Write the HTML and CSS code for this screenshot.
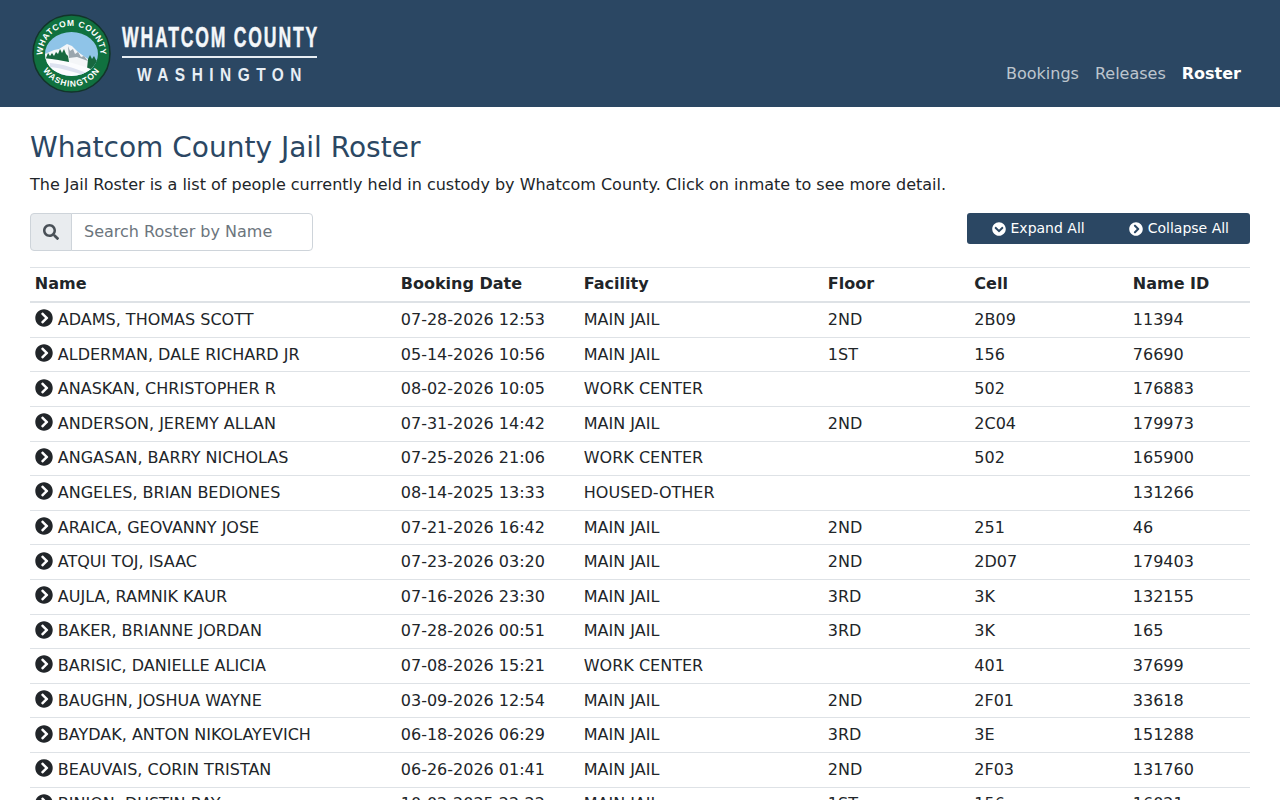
FILE: index.html
```html
<!DOCTYPE html>
<html lang="en">
<head>
    <meta charset="UTF-8">
    <meta name="viewport" content="width=device-width, initial-scale=1.0">
    <title>Whatcom County Jail Roster</title>
    <link rel="stylesheet" href="styles.css">
</head>
<body>
<svg class="icon-defs" width="0" height="0" aria-hidden="true">
    <symbol id="chevron-right" viewBox="0 0 512 512">
        <path d="M256 8c137 0 248 111 248 248S393 504 256 504 8 393 8 256 119 8 256 8zm113.900 231L234.400 103.500c-9.400-9.400-24.600-9.400-33.900 0l-17 17c-9.400 9.400-9.400 24.600 0 33.900L285.100 256 183.500 357.600c-9.400 9.400-9.400 24.600 0 33.900l17 17c9.400 9.400 24.600 9.400 33.900 0L369.900 273c9.400-9.400 9.400-24.600 0-34z"/>
    </symbol>
    <symbol id="chevron-down" viewBox="0 0 512 512">
        <path d="M504 256c0 137-111 248-248 248S8 393 8 256 119 8 256 8s248 111 248 248zM273 369.900l135.500-135.500c9.400-9.400 9.400-24.600 0-33.900l-17-17c-9.400-9.400-24.600-9.400-33.900 0L256 285.100 154.400 183.500c-9.400-9.400-24.600-9.400-33.900 0l-17 17c-9.400 9.400-9.400 24.600 0 33.900L239 369.900c9.400 9.400 24.600 9.400 34 0z"/>
    </symbol>
</svg>
<header class="header">
    <svg class="logo" viewBox="0 0 290 82" role="img" aria-label="Whatcom County Washington">
        <defs>
            <path id="arc-top" d="M12.500 43a29 29 0 0 1 58 0"/>
            <path id="arc-bottom" d="M8.500 41.500a33 33 0 0 0 66 0"/>
            <clipPath id="scene"><ellipse cx="41.500" cy="42" rx="26.500" ry="22"/></clipPath>
        </defs>
        <circle cx="41.500" cy="41.500" r="38.500" fill="#10713f" stroke="#12352a" stroke-width="1.500"/>
        <g clip-path="url(#scene)">
            <rect x="12" y="15" width="60" height="55" fill="#8fc4e8"/>
            <path d="M15 42l9-4 5-1 8-5 5 2 6 6 7 5 9 6v8H15z" fill="#f4f6f8"/>
            <path d="M38 34l2 5 3-2 2 5 3-2 3 5 3-1 4 5-11-4-8 1z" fill="#9aa6ae"/>
            <path d="M16 46l2-5 2 3 2-3 2 3 2-4 2 2 2-5 2 4 2-4 2 5 2 2 1 6H16zM58 47l2-4 2 4 2-3 2 4 2 1v8H57z" fill="#17683f"/>
            <path d="M10 46c20 1 40 6 60 15v10H10z" fill="#fbfcfe"/>
            <path d="M20 51c12 1 26 5 38 11l-2 2c-12-4-24-8-36-9z" fill="#dde2f0"/>
        </g>
        <text class="logo-seal"><textPath href="#arc-top" startOffset="50%" text-anchor="middle">WHATCOM COUNTY</textPath></text>
        <text class="logo-seal logo-seal-wide"><textPath href="#arc-bottom" startOffset="50%" text-anchor="middle">WASHINGTON</textPath></text>
        <text class="logo-county" x="92" y="35" textLength="197" lengthAdjust="spacingAndGlyphs">WHATCOM COUNTY</text>
        <rect x="92" y="44" width="195" height="2" fill="#e8eef4"/>
        <text class="logo-state" x="107" y="69" textLength="171" lengthAdjust="spacingAndGlyphs">WASHINGTON</text>
    </svg>
    <nav class="nav">
        <a href="#">Bookings</a>
        <a href="#">Releases</a>
        <a href="#" class="active">Roster</a>
    </nav>
</header>
<main class="content">
    <h1>Whatcom County Jail Roster</h1>
    <p class="intro">The Jail Roster is a list of people currently held in custody by Whatcom County. Click on inmate to see more detail.</p>
    <div class="toolbar">
        <div class="search">
            <span class="search-icon">
                <svg viewBox="0 0 512 512"><path d="M505 442.700L405.300 343c-4.500-4.500-10.600-7-17-7H372c27.600-35.300 44-79.700 44-128C416 93.100 322.900 0 208 0S0 93.100 0 208s93.100 208 208 208c48.300 0 92.700-16.400 128-44v16.300c0 6.400 2.500 12.500 7 17l99.700 99.700c9.400 9.400 24.600 9.400 33.900 0l28.300-28.300c9.400-9.400 9.400-24.600.1-34zM208 336c-70.700 0-128-57.200-128-128 0-70.700 57.200-128 128-128 70.700 0 128 57.200 128 128 0 70.700-57.200 128-128 128z"/></svg>
            </span>
            <input class="search-input" type="text" placeholder="Search Roster by Name">
        </div>
        <div class="btn-group">
            <button class="btn" type="button"><svg class="btn-icon"><use href="#chevron-down"/></svg> Expand All</button>
            <button class="btn" type="button"><svg class="btn-icon"><use href="#chevron-right"/></svg> Collapse All</button>
        </div>
    </div>
    <table class="roster">
        <colgroup>
            <col class="col-name"><col class="col-date"><col class="col-facility">
            <col class="col-floor"><col class="col-cell"><col>
        </colgroup>
        <thead>
            <tr><th>Name</th><th>Booking Date</th><th>Facility</th><th>Floor</th><th>Cell</th><th>Name ID</th></tr>
        </thead>
        <tbody id="roster-body"></tbody>
    </table>
</main>
<script src="roster.js"></script>
</body>
</html>
```

FILE: styles.css
```css
html, body {
    margin: 0;
    padding: 0;
}
body {
    font-family: "DejaVu Sans", sans-serif;
    font-size: 16px;
    line-height: 1.5;
    color: #212529;
    background-color: #fff;
}
.icon-defs {
    position: absolute;
}
.header {
    display: flex;
    justify-content: space-between;
    height: 107px;
    box-sizing: border-box;
    padding: 12px 39px 0 30px;
    background-color: #2b4763;
}
.logo {
    width: 290px;
    height: 82px;
}
.logo-seal {
    font-family: "Liberation Sans", sans-serif;
    font-size: 8.500px;
    font-weight: bold;
    letter-spacing: 0.6px;
    fill: #fff;
}
.logo-seal-wide {
    letter-spacing: 1px;
}
.logo-county {
    font-family: "Liberation Sans", sans-serif;
    font-size: 29px;
    font-weight: bold;
    letter-spacing: 3px;
    fill: #f4f7fa;
    stroke: #f4f7fa;
    stroke-width: 0.5px;
}
.logo-state {
    font-family: "Liberation Sans", sans-serif;
    font-size: 19px;
    font-weight: bold;
    letter-spacing: 8px;
    fill: #e8eef4;
}
.nav {
    display: flex;
    gap: 16px;
    padding-top: 50px;
}
.nav a {
    color: rgba(255, 255, 255, 0.7);
    text-decoration: none;
}
.nav a.active {
    color: #fff;
    font-weight: bold;
}
.content {
    padding: 0 30px;
}
h1 {
    margin: 22px 0 6px;
    font-size: 28px;
    font-weight: 400;
    line-height: 38px;
    color: #2b4763;
}
.intro {
    margin: 0 0 16px;
}
.toolbar {
    display: flex;
    justify-content: space-between;
    align-items: flex-start;
    margin-bottom: 15.600px;
}
.search {
    display: flex;
    width: 283px;
    height: 38px;
}
.search-icon {
    display: flex;
    align-items: center;
    justify-content: center;
    width: 42px;
    box-sizing: border-box;
    background-color: #e9ecef;
    border: 1px solid #ced4da;
    border-radius: 4px 0 0 4px;
}
.search-icon svg {
    width: 16px;
    height: 16px;
    fill: #495057;
}
.search-input {
    flex: 1;
    min-width: 0;
    margin-left: -1px;
    padding: 6px 12px;
    font: inherit;
    color: #495057;
    border: 1px solid #ced4da;
    border-radius: 0 4px 4px 0;
    box-sizing: border-box;
}
.search-input::placeholder {
    color: #6c757d;
    opacity: 1;
}
.btn-group {
    display: flex;
    height: 31px;
    background-color: #2b4763;
    border-radius: 3px;
}
.btn {
    display: flex;
    align-items: center;
    gap: 5px;
    padding: 0 21px 0 0;
    margin: 0 0 0 25px;
    font: inherit;
    font-size: 14px;
    color: #fff;
    background: none;
    border: none;
}
.btn + .btn {
    margin-left: 23px;
}
.btn-icon, .row-icon {
    fill: currentColor;
}
.btn-icon {
    width: 14px;
    height: 14px;
}
.roster {
    width: 100%;
    table-layout: fixed;
    border-collapse: collapse;
}
.col-name { width: 366px; }
.col-date { width: 183px; }
.col-facility { width: 244px; }
.col-floor { width: 146.500px; }
.col-cell { width: 158.500px; }
.roster th, .roster td {
    padding: 4.800px;
    text-align: left;
    vertical-align: top;
    white-space: nowrap;
    border-top: 1px solid #dee2e6;
}
.roster th {
    font-weight: bold;
    border-bottom: 2px solid #dee2e6;
}
.row-icon {
    width: 18px;
    height: 18px;
    margin-right: 5px;
    vertical-align: -2.400px;
}
```

FILE: roster.js
```js
// roster rows, same order as the list is sorted
const rows = [
    ["ADAMS, THOMAS SCOTT", "07-28-2026 12:53", "MAIN JAIL", "2ND", "2B09", "11394"],
    ["ALDERMAN, DALE RICHARD JR", "05-14-2026 10:56", "MAIN JAIL", "1ST", "156", "76690"],
    ["ANASKAN, CHRISTOPHER R", "08-02-2026 10:05", "WORK CENTER", "", "502", "176883"],
    ["ANDERSON, JEREMY ALLAN", "07-31-2026 14:42", "MAIN JAIL", "2ND", "2C04", "179973"],
    ["ANGASAN, BARRY NICHOLAS", "07-25-2026 21:06", "WORK CENTER", "", "502", "165900"],
    ["ANGELES, BRIAN BEDIONES", "08-14-2025 13:33", "HOUSED-OTHER", "", "", "131266"],
    ["ARAICA, GEOVANNY JOSE", "07-21-2026 16:42", "MAIN JAIL", "2ND", "251", "46"],
    ["ATQUI TOJ, ISAAC", "07-23-2026 03:20", "MAIN JAIL", "2ND", "2D07", "179403"],
    ["AUJLA, RAMNIK KAUR", "07-16-2026 23:30", "MAIN JAIL", "3RD", "3K", "132155"],
    ["BAKER, BRIANNE JORDAN", "07-28-2026 00:51", "MAIN JAIL", "3RD", "3K", "165"],
    ["BARISIC, DANIELLE ALICIA", "07-08-2026 15:21", "WORK CENTER", "", "401", "37699"],
    ["BAUGHN, JOSHUA WAYNE", "03-09-2026 12:54", "MAIN JAIL", "2ND", "2F01", "33618"],
    ["BAYDAK, ANTON NIKOLAYEVICH", "06-18-2026 06:29", "MAIN JAIL", "3RD", "3E", "151288"],
    ["BEAUVAIS, CORIN TRISTAN", "06-26-2026 01:41", "MAIN JAIL", "2ND", "2F03", "131760"],
    ["BINION, DUSTIN RAY", "10-02-2025 22:22", "MAIN JAIL", "1ST", "156", "16021"]
];

const body = document.getElementById('roster-body');
rows.forEach(function(row) {
    const tr = document.createElement('tr');
    row.forEach(function(value, i) {
        const td = document.createElement('td');
        if (i === 0) {
            td.innerHTML = '<svg class="row-icon"><use href="#chevron-right"/></svg>';
        }
        td.appendChild(document.createTextNode(value));
        tr.appendChild(td);
    });
    body.appendChild(tr);
});
```
